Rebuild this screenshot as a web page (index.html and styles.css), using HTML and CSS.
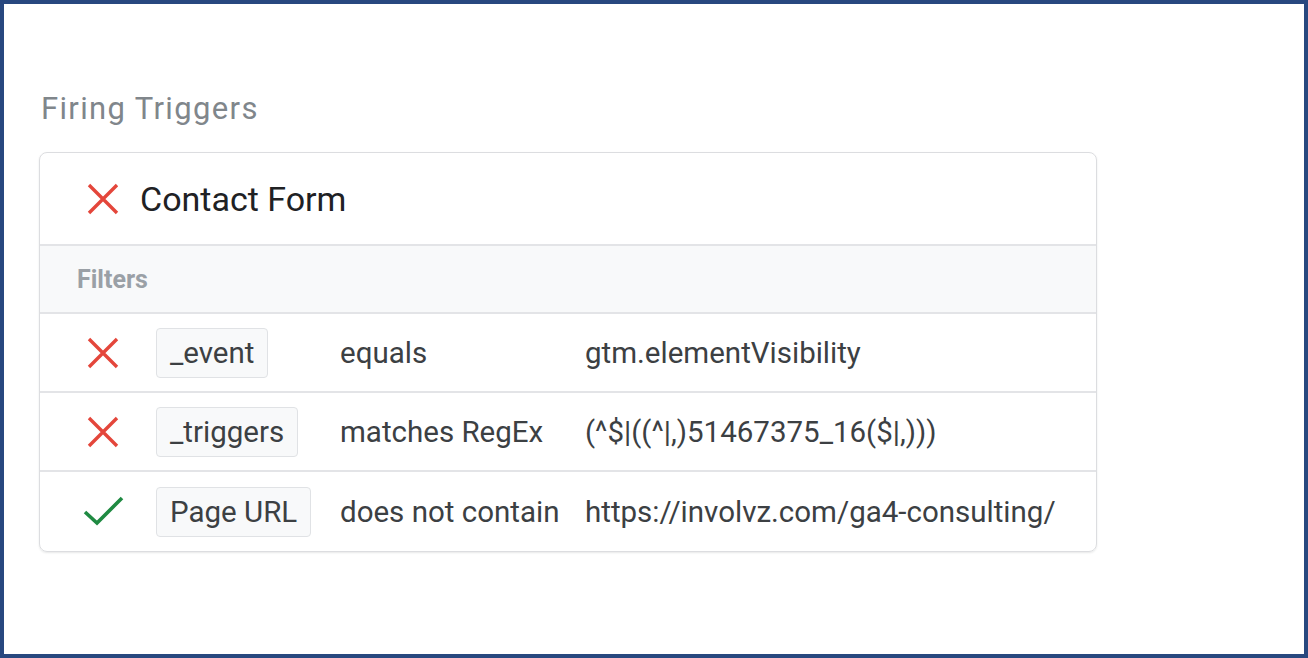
FILE: index.html
```html
<!DOCTYPE html>
<html>
<head>
<meta charset="utf-8">
<link rel="stylesheet" href="styles.css">
</head>
<body>
<div class="frame">
  <h2 class="title">Firing Triggers</h2>
  <div class="card">
    <div class="card-head">
      <svg class="icon" viewBox="0 0 34 34"><path d="M3 3 L31 31 M31 3 L3 31" class="x"/></svg>
      <span class="trigger-name">Contact Form</span>
    </div>
    <div class="filters-head">Filters</div>
    <div class="row">
      <svg class="icon" viewBox="0 0 34 34"><path d="M3 3 L31 31 M31 3 L3 31" class="x"/></svg>
      <div class="cell"><span class="chip">_event</span></div>
      <div class="cell op">equals</div>
      <div class="cell val">gtm.elementVisibility</div>
    </div>
    <div class="row">
      <svg class="icon" viewBox="0 0 34 34"><path d="M3 3 L31 31 M31 3 L3 31" class="x"/></svg>
      <div class="cell"><span class="chip">_triggers</span></div>
      <div class="cell op">matches RegEx</div>
      <div class="cell val">(^$|((^|,)51467375_16($|,)))</div>
    </div>
    <div class="row last">
      <svg class="icon check-icon" viewBox="0 0 42 34"><path d="M2 17 L14 28 L39 3" class="check"/></svg>
      <div class="cell"><span class="chip">Page URL</span></div>
      <div class="cell op">does not contain</div>
      <div class="cell val">https://involvz.com/ga4-consulting/</div>
    </div>
  </div>
</div>
</body>
</html>
```

FILE: styles.css
```css
html, body {
  margin: 0;
  padding: 0;
  background: #ffffff;
}
.frame {
  box-sizing: border-box;
  width: 1308px;
  height: 658px;
  border: 4px solid #28487f;
  padding: 88px 0 0 35px;
  font-family: Roboto, "Noto Sans", Arial, sans-serif;
  background: #fff;
}
.title {
  margin: 0 0 26px 2px;
  font-size: 31px;
  line-height: 34px;
  font-weight: 400;
  letter-spacing: 1.35px;
  color: #80868b;
}
.card {
  box-sizing: border-box;
  width: 1058px;
  border: 1px solid #dcdde0;
  border-radius: 8px;
  box-shadow: 0 1px 2px rgba(60, 64, 67, 0.12);
  overflow: hidden;
}
.card-head {
  display: flex;
  align-items: center;
  height: 91px;
  padding-left: 46px;
  gap: 20px;
  border-bottom: 2px solid #e3e4e7;
}
.icon {
  width: 34px;
  height: 34px;
  flex: none;
}
.x {
  stroke: #e4463b;
  stroke-width: 3.4;
  fill: none;
}
.check {
  stroke: #1f8a42;
  stroke-width: 3.6;
  fill: none;
}
.check-icon {
  width: 42px;
  margin-left: -3px;
}
.trigger-name {
  font-size: 34px;
  color: #202124;
}
.filters-head {
  display: flex;
  align-items: center;
  height: 66px;
  padding-left: 37px;
  background: #f8f9fa;
  font-size: 25px;
  font-weight: 700;
  color: #9aa0a6;
  border-bottom: 2px solid #e3e4e7;
}
.row {
  display: grid;
  grid-template-columns: 70px 184px 245px 1fr;
  align-items: center;
  height: 77px;
  padding-left: 46px;
  border-bottom: 2px solid #e3e4e7;
  font-size: 29.5px;
  color: #3c4043;
}
.row.last {
  border-bottom: none;
  height: 79px;
}
.cell {
  white-space: nowrap;
}
.chip {
  display: inline-block;
  box-sizing: border-box;
  height: 50px;
  line-height: 48px;
  padding: 0 13px;
  background: #f8f9fa;
  border: 1px solid #e0e2e5;
  border-radius: 4px;
  color: #3c4043;
}
```
